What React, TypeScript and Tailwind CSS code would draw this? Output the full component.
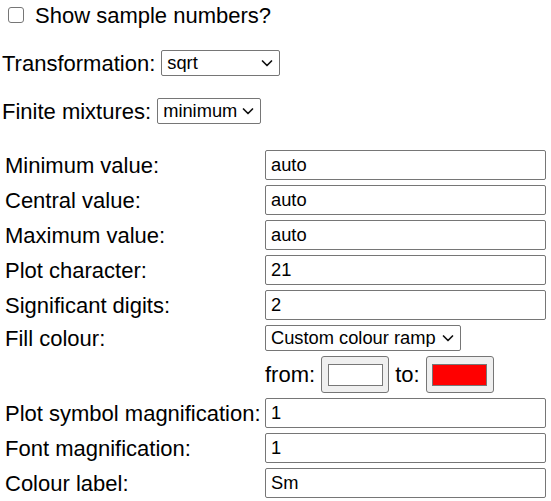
import { useState } from "react";

type Field = {
  label: string;
  value: string;
};

const topFields: Field[] = [
  { label: "Minimum value:", value: "auto" },
  { label: "Central value:", value: "auto" },
  { label: "Maximum value:", value: "auto" },
  { label: "Plot character:", value: "21" },
  { label: "Significant digits:", value: "2" },
];

const bottomFields: Field[] = [
  { label: "Plot symbol magnification:", value: "1" },
  { label: "Font magnification:", value: "1" },
  { label: "Colour label:", value: "Sm" },
];

function Chevron() {
  return (
    <svg
      width="14"
      height="14"
      viewBox="0 0 14 14"
      className="pointer-events-none absolute right-[6px] top-[6px]"
    >
      <path
        d="M2.5 5 L7 9.5 L11.5 5"
        fill="none"
        stroke="#111"
        strokeWidth="1.7"
        strokeLinecap="round"
        strokeLinejoin="round"
      />
    </svg>
  );
}

function Select({
  options,
  width,
}: {
  options: string[];
  width: string;
}) {
  const [value, setValue] = useState(options[0]);
  return (
    <span className={`relative block h-[26px] shrink-0 ${width}`}>
      <select
        value={value}
        onChange={(event) => setValue(event.target.value)}
        className="block h-[26px] w-full appearance-none rounded-[2px] border border-[#767676] bg-white pl-[5px] pr-[22px] text-[18.3px] leading-none text-black outline-none"
      >
        {options.map((option) => (
          <option key={option}>{option}</option>
        ))}
      </select>
      <Chevron />
    </span>
  );
}

function TextRow({ label, value }: Field) {
  const [text, setText] = useState(value);
  return (
    <div className="flex h-[30px] items-center">
      <span className="w-[265px] shrink-0 whitespace-nowrap pl-[5px]">{label}</span>
      <input
        type="text"
        value={text}
        onChange={(event) => setText(event.target.value)}
        className="h-[30px] w-[281px] rounded-[2px] border border-[#767676] bg-white px-[5px] text-[18.3px] text-black outline-none"
      />
    </div>
  );
}

function ColourSwatch({ colour }: { colour: string }) {
  return (
    <button
      type="button"
      className="flex h-[37px] w-[68px] items-center justify-center rounded-[3px] border border-[#767676] bg-[#efefef]"
    >
      <span
        className={`block h-[22px] w-[55px] border border-[#777777] ${colour}`}
      />
    </button>
  );
}

export default function App() {
  const [showNumbers, setShowNumbers] = useState(false);

  return (
    <main
      className="min-h-screen bg-white text-[22px] text-black"
      style={{ fontFamily: '"Liberation Sans", Arial, sans-serif' }}
    >
      <label className="flex h-[30px] items-center">
        <input
          type="checkbox"
          checked={showNumbers}
          onChange={(event) => setShowNumbers(event.target.checked)}
          className="ml-[8px] mr-[11px] mb-[1px] h-[16px] w-[16px] appearance-none rounded-[3px] border border-[#767676] bg-white checked:bg-blue-600"
        />
        <span>Show sample numbers?</span>
      </label>

      <div className="mt-[20px] flex h-[26px] items-center pl-[2px]">
        <span className="mr-[6px]">Transformation:</span>
        <Select
          width="w-[119px]"
          options={["sqrt", "none", "log", "logit"]}
        />
      </div>

      <div className="mt-[22px] flex h-[26px] items-center pl-[2px]">
        <span className="mr-[6px]">Finite mixtures:</span>
        <Select
          width="w-[104px]"
          options={["minimum", "maximum", "none"]}
        />
      </div>

      <div className="mt-[26px] flex flex-col gap-[5px]">
        {topFields.map((field) => (
          <TextRow key={field.label} {...field} />
        ))}

        <div className="flex h-[26px] items-center">
          <span className="w-[265px] shrink-0 pl-[5px]">Fill colour:</span>
          <Select
            width="w-[196px]"
            options={["Custom colour ramp", "Rainbow", "Heat"]}
          />
        </div>

        <div className="flex h-[37px] items-center">
          <span className="w-[265px] shrink-0" />
          <span className="mr-[6px]">from:</span>
          <ColourSwatch colour="bg-white" />
          <span className="mx-[6px]">to:</span>
          <ColourSwatch colour="bg-[#ff0000]" />
        </div>

        {bottomFields.map((field) => (
          <TextRow key={field.label} {...field} />
        ))}
      </div>
    </main>
  );
}
